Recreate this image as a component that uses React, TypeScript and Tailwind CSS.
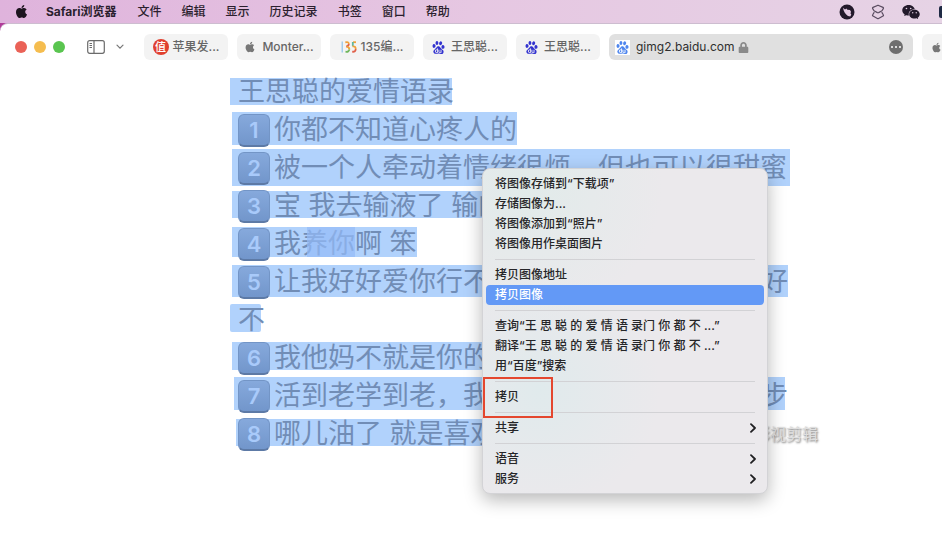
import React from "react";
import { FaApple, FaLock } from "react-icons/fa";
import { SiBaidu } from "react-icons/si";
import { AiFillWechat } from "react-icons/ai";

const font = "font-['Inter','Noto_Sans_CJK_SC',sans-serif]";

const menus = ["文件", "编辑", "显示", "历史记录", "书签", "窗口", "帮助"];

function BirdBadge() {
  return (
    <svg viewBox="0 0 16 16" className="size-4" aria-hidden="true">
      <circle cx="8" cy="8" r="7.5" fill="#231a2b" />
      <path d="M4 3.800 6 5.600l1.400-1.200 1 1.400 2.600.2 1 1.800-.5 1.600.8 1.200-1 1.900-2.300-.6C6.500 10.500 4.600 7.600 4 3.800z" fill="#e4cbe2" />
    </svg>
  );
}

function StackIcon() {
  return (
    <svg viewBox="0 0 14 16" className="h-4 w-[14px]" fill="none" stroke="#5a4c60" strokeWidth="1.200" strokeLinejoin="round" strokeLinecap="round" aria-hidden="true">
      <path d="M7 1.200 12 3.400q.8.400.3 1.200L11 6.800 7.600 8.600q-.6.300-1.200 0L3 6.800 1.700 4.600Q1.200 3.800 2 3.400z" />
      <path d="M3 8.600 1.700 10.800q-.5.800.3 1.200l4.400 2.500q.6.300 1.200 0L12 12q.8-.4.300-1.200L11 8.600" />
    </svg>
  );
}

function SidebarIcon() {
  return (
    <svg viewBox="0 0 18 14" className="h-[14px] w-[18px]" fill="none" stroke="#6b6b6b" strokeWidth="1.200" aria-hidden="true">
      <rect x=".7" y=".7" width="16.600" height="12.600" rx="2" />
      <path d="M7 .7v12.600M2.500 3.500h2.500M2.500 5.500h2.500M2.500 7.500h2.500" />
    </svg>
  );
}

function ZhiIcon() {
  return (
    <span className="flex size-4 shrink-0 items-center justify-center rounded-full bg-[#e0402f] text-[11px] leading-none text-white">值</span>
  );
}

function Icon135() {
  return (
    <svg viewBox="0 0 16 14" className="h-[14px] w-4 shrink-0" fill="none" strokeWidth="1.800" aria-hidden="true">
      <path d="M1.200 1.500v11" stroke="#8fc3ea" strokeWidth="1.200" />
      <path d="M4.300 2.400q3.400-1 3.500 1.600" stroke="#f0a13a" />
      <path d="M7.800 4q0 2-2.600 2.600" stroke="#e0604a" />
      <path d="M5.500 6.700q3 .3 2.800 2.800" stroke="#f0a13a" />
      <path d="M8.300 9.500q-.3 2.700-3.800 2.200" stroke="#6fb65a" />
      <path d="M15 2.200h-3" stroke="#f0a13a" />
      <path d="M11.800 2v4.300" stroke="#5cb8a0" />
      <path d="M11.500 6.400q3.200-.4 3.200 2.500" stroke="#f0a13a" />
      <path d="M14.700 8.900q0 3.300-3.500 2.800" stroke="#e0604a" />
    </svg>
  );
}

const paw = <SiBaidu className="size-[13px] shrink-0 text-[#3333cf]" />;

const tabs = [
  { icon: <ZhiIcon />, title: "苹果发...", gap: "gap-1" },
  { icon: <FaApple className="size-3 shrink-0 text-[#777]" />, title: "Monter...", gap: "gap-1.5" },
  { icon: <Icon135 />, title: "135编...", gap: "gap-1" },
  { icon: paw, title: "王思聪...", gap: "gap-1.5" },
  { icon: paw, title: "王思聪...", gap: "gap-1.5" },
];

type Line = { n?: number; text: string; end?: string; mark: string };

const lines: Line[] = [
  { text: "王思聪的爱情语录", mark: "ml-0 mt-[5px] h-[27px] w-[222px]" },
  { n: 1, text: "你都不知道心疼人的", mark: "ml-0.5 mt-px h-[33px] w-[285px]" },
  { n: 2, text: "被一个人牵动着情绪很烦，但也可以很甜蜜", mark: "ml-0.5 h-[37px] w-[558px]" },
  { n: 3, text: "宝 我去输液了 输的", mark: "ml-0.5 mt-1 h-[27px] w-[340px]" },
  { n: 4, text: "我养你啊 笨", mark: "ml-0.5 mt-0.5 h-[30px] w-[185px]" },
  { n: 5, text: "让我好好爱你行不", end: "好", mark: "ml-0.5 mt-0.5 h-8 w-[556px]" },
  { text: "不", mark: "mt-[3px] h-7 w-[31px] rounded-xs" },
  { n: 6, text: "我他妈不就是你的", mark: "ml-0.5 mt-[3px] h-7 w-[340px]" },
  { n: 7, text: "活到老学到老，我", end: "步", mark: "ml-1 h-[33px] w-[551px]" },
  { n: 8, text: "哪儿油了 就是喜欢", mark: "ml-1.5 mt-1 h-[27px] w-[340px]" },
];

function Keycap({ n }: { n: number }) {
  return (
    <span className="mr-1 flex h-[33px] w-8 shrink-0 items-center justify-center rounded-md border border-b-2 border-[#7395c6] border-b-[#5d7aa6] bg-linear-to-b from-[#86a9dc] to-[#7296cb] text-[22px] font-semibold leading-none text-[#a9cafa]">
      {n}
    </span>
  );
}

function DocumentLine({ line }: { line: Line }) {
  return (
    <p className="grid h-[38px]">
      <span className={`col-start-1 row-start-1 bg-[#b1d2fc] ${line.mark}`} />
      <span className="relative z-10 col-start-1 row-start-1 flex items-center whitespace-nowrap pl-2 text-[27px] leading-[38px] text-[#718db6]">
        {line.n && <Keycap n={line.n} />}
        <span>{line.text}</span>
        {line.end && <span className="ml-auto">{line.end}</span>}
        {line.n === 4 && <span className="absolute left-[77px] top-0.5 h-[30px] w-12 bg-[#94bbf8]/70" />}
      </span>
    </p>
  );
}

const groups = [
  ["将图像存储到“下载项”", "存储图像为...", "将图像添加到“照片”", "将图像用作桌面图片"],
  ["拷贝图像地址", "拷贝图像"],
  ["查询“王 思 聪 的 爱 情 语 录门 你 都 不 ...”", "翻译“王 思 聪 的 爱 情 语 录门 你 都 不 ...”", "用“百度”搜索"],
  ["拷贝"],
  ["共享"],
  ["语音", "服务"],
];
const submenus = ["共享", "语音", "服务"];

function ContextMenu() {
  return (
    <div
      role="menu"
      className="absolute left-[482px] top-[98px] z-20 w-[286px] rounded-lg border border-[#d3d3d6] bg-[#ebe9ec] bg-[radial-gradient(circle_at_15%_5%,#e1ebea,transparent_35%),radial-gradient(circle_at_20%_68%,#e0eaec,transparent_38%)] px-[3px] pb-1 pt-[5px] shadow-[0_6px_18px_rgba(0,0,0,0.28)]"
    >
      {groups.map((group, i) => (
        <React.Fragment key={i}>
          {i > 0 && <hr className="mx-[9px] my-[5px] border-[#d2d2d5]" />}
          {group.map((label) => (
            <button
              key={label}
              role="menuitem"
              className={`flex h-5 w-full items-center justify-between whitespace-nowrap rounded pl-[9px] pr-2 text-left text-xs font-medium ${
                label === "拷贝图像" ? "bg-[#6399f6] text-white" : "text-[#262628]"
              }`}
            >
              {label}
              {submenus.includes(label) && (
                <svg viewBox="0 0 6 10" className="h-[10px] w-1.5" fill="none" stroke="#202022" strokeWidth="1.800" strokeLinecap="round" strokeLinejoin="round" aria-hidden="true">
                  <path d="M1 1.200 5 5 1 8.800" />
                </svg>
              )}
            </button>
          ))}
        </React.Fragment>
      ))}
      <span className="pointer-events-none absolute left-0 top-[208px] h-[41px] w-[70px] border-2 border-[#e4472f]" />
    </div>
  );
}

export default function App() {
  return (
    <div className={`min-h-screen overflow-hidden bg-white ${font}`}>
      <div className="bg-linear-to-r from-[#dfb3dc] via-[#e6c7e2] to-[#e6d3e5]">
        <header className="flex h-[23px] items-center pl-[14px] text-xs text-[#2b1f2e]">
          <FaApple className="mr-[17px] size-[15px] shrink-0 text-[#1d141f]" />
          <nav className="flex gap-5 whitespace-nowrap font-medium">
            <button className="mr-px font-bold">Safari浏览器</button>
            {menus.map((m) => (
              <button key={m}>{m}</button>
            ))}
          </nav>
          <div className="ml-auto flex items-center gap-4">
            <BirdBadge />
            <StackIcon />
            <AiFillWechat className="size-5 text-[#231a2b]" />
            <span className="ml-0.5 h-3 w-[3px] rounded-l-xs bg-[#1f2a44]" />
          </div>
        </header>
        <div className="bg-linear-to-r from-[#b03a98] to-transparent to-[30%]">
          <div className="flex h-[47px] items-center rounded-tl-lg border-t border-[#cdbdd0] bg-white pl-[15px]">
            <div className="flex shrink-0 gap-[7px]">
              <span className="size-3 rounded-full bg-[#ea6257]" />
              <span className="size-3 rounded-full bg-[#f5bd4f]" />
              <span className="size-3 rounded-full bg-[#5ac550]" />
            </div>
            <button aria-label="边栏" className="ml-[22px] shrink-0">
              <SidebarIcon />
            </button>
            <button aria-label="标签页组" className="ml-[11px] mr-5 shrink-0">
              <svg viewBox="0 0 8 6" className="h-1.5 w-2" fill="none" stroke="#777" strokeWidth="1.200" strokeLinecap="round" aria-hidden="true">
                <path d="m1 1.200 3 3 3-3" />
              </svg>
            </button>
            <div className="flex min-w-0 flex-1 gap-[9px]">
              {tabs.map((t, i) => (
                <button key={i} className={`flex h-[26px] w-[84px] shrink-0 items-center justify-center whitespace-nowrap rounded-md bg-[#f3f3f3] text-xs font-medium text-[#666] ${t.gap}`}>
                  {t.icon}
                  {t.title}
                </button>
              ))}
              <div className="flex h-[26px] min-w-0 flex-1 items-center rounded-md bg-[#e0e0e0] pl-1.5 pr-2.5">
                <span className="mr-1.5 flex size-[15px] items-center justify-center bg-white">
                  <SiBaidu className="size-[13px] text-[#4f86ee]" />
                </span>
                <input aria-label="网址" defaultValue="gimg2.baidu.com" className="h-5 w-[102px] bg-transparent text-xs leading-5 text-[#2f2f2f] outline-none" />
                <FaLock className="size-[11px] text-[#8a8a8a]" />
                <button aria-label="更多" className="ml-auto flex size-[14px] items-center justify-center gap-0.5 rounded-full bg-[#6e6e6e]">
                  <span className="size-0.5 rounded-full bg-white" />
                  <span className="size-0.5 rounded-full bg-white" />
                  <span className="size-0.5 rounded-full bg-white" />
                </button>
              </div>
              <button aria-label="Apple" className="flex h-[26px] w-5 shrink-0 items-center justify-end rounded-l-md bg-[#f3f3f3]">
                <FaApple className="size-[11px] text-[#777]" />
              </button>
            </div>
          </div>
        </div>
      </div>
      <main className="relative pl-[230px] pt-[3px]">
        <article className="w-[558px]">
          {lines.map((line, i) => (
            <DocumentLine key={i} line={line} />
          ))}
        </article>
        <span className="absolute left-[754px] top-[352px] text-base leading-6 text-[#dedede] [text-shadow:1px_1px_2px_#777]">影视剪辑</span>
        <ContextMenu />
      </main>
    </div>
  );
}
